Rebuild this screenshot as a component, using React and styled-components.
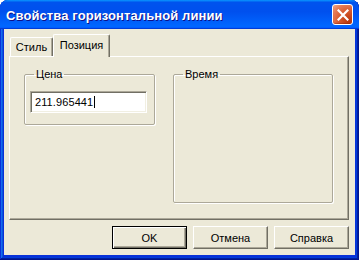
import styled, { createGlobalStyle } from 'styled-components';

const GlobalStyle = createGlobalStyle`
  html, body {
    margin: 0;
    padding: 0;
    background: #ffffff;
  }
  * {
    box-sizing: border-box;
  }
`;

export default function App() {
  return (
    <>
      <GlobalStyle />
      <Window>
        <TitleBar>
          <TitleText>Свойства горизонтальной линии</TitleText>
          <CloseButton>
            <svg width="12" height="12" viewBox="0 0 12 12">
              <path d="M1.5 1.5 L10.5 10.5 M10.5 1.5 L1.5 10.5" stroke="#fff" strokeWidth="2.2" strokeLinecap="square" />
            </svg>
          </CloseButton>
        </TitleBar>
        <Client>
          <TabStrip>
            <Tab width={43}>Стиль</Tab>
            <Tab width={57} selected>Позиция</Tab>
          </TabStrip>
          <TabPanel>
            <Group width={131} height={57}>
              <Legend>Цена</Legend>
              <TextBox>
                211.965441
                <Caret />
              </TextBox>
            </Group>
            <Group width={160} height={135}>
              <Legend>Время</Legend>
            </Group>
          </TabPanel>
          <ButtonRow>
            <Button isDefault>OK</Button>
            <Button>Отмена</Button>
            <Button>Справка</Button>
          </ButtonRow>
        </Client>
      </Window>
    </>
  );
}

const Window = styled.div`
  width: 359px;
  height: 260px;
  display: flex;
  flex-direction: column;
  padding: 0 4px 5px 4px;
  background: #0831d9;
  border-radius: 8px 8px 0 0;
  box-shadow: inset -1px -1px #00138c, inset 1px 1px #0831d9,
    inset -2px -2px #001ea0, inset 2px 2px #166aee,
    inset -3px -3px #003bda, inset 3px 3px #0855dd;
  font-family: 'Liberation Sans', Arial, sans-serif;
  font-size: 11px;
  color: #000;
`;

const TitleBar = styled.div`
  height: 29px;
  margin: 0 -4px;
  padding: 0 6px 0 6px;
  display: flex;
  align-items: center;
  justify-content: space-between;
  border-radius: 8px 8px 0 0;
  background: linear-gradient(
    180deg,
    #0997ff,
    #0053ee 8%,
    #0050ee 40%,
    #0066ff 88%,
    #0066ff 93%,
    #005bff 95%,
    #003dd7 96%,
    #003dd7
  );
`;

const TitleText = styled.div`
  font-family: 'Liberation Sans', Arial, sans-serif;
  font-weight: bold;
  font-size: 13px;
  color: #ffffff;
  text-shadow: 1px 1px #0f1089;
  letter-spacing: 0.1px;
  padding-top: 1px;
`;

const CloseButton = styled.div`
  width: 21px;
  height: 21px;
  margin-right: 0;
  display: flex;
  align-items: center;
  justify-content: center;
  border: 1px solid #ffffff;
  border-radius: 3px;
  background: radial-gradient(circle at 85% 85%, #b8360c 0%, #d65a2e 45%, #e67c57 75%, #f2a88a 100%);
  box-shadow: inset 0 -1px 1px rgba(120, 20, 0, 0.4);
`;

const Client = styled.div`
  flex: 1;
  display: flex;
  flex-direction: column;
  padding: 5px 6px 6px 5px;
  background: #ece9d8;
`;

const TabStrip = styled.div`
  height: 22px;
  display: flex;
  align-items: flex-end;
  padding-left: 1px;
`;

const Tab = styled.div`
  position: relative;
  z-index: ${({ selected }) => (selected ? 2 : 1)};
  width: ${({ width }) => width}px;
  height: ${({ selected }) => (selected ? 23 : 19)}px;
  margin-bottom: ${({ selected }) => (selected ? -1 : 0)}px;
  display: flex;
  align-items: center;
  justify-content: center;
  padding-bottom: ${({ selected }) => (selected ? 3 : 0)}px;
  background: #ece9d8;
  border-top: 1px solid #ffffff;
  border-left: 1px solid #ffffff;
  border-right: 1px solid #716f64;
  border-radius: 2px 2px 0 0;
  box-shadow: inset -1px 0 #aca899;
`;

const TabPanel = styled.div`
  height: 164px;
  display: flex;
  align-items: flex-start;
  gap: 18px;
  padding: 11px 0 0 14px;
  background: #ece9d8;
  border-top: 1px solid #ffffff;
  border-left: 1px solid #ffffff;
  border-right: 1px solid #716f64;
  border-bottom: 1px solid #716f64;
  box-shadow: inset -1px -1px #aca899;
`;

const Group = styled.fieldset`
  width: ${({ width }) => width}px;
  height: ${({ height }) => height}px;
  margin: 0;
  padding: 10px 0 0 5px;
  min-inline-size: 0;
  border: 1px solid #aca899;
  border-radius: 2px;
  box-shadow: 1px 1px #ffffff, inset 1px 1px #ffffff;
`;

const Legend = styled.legend`
  margin-left: 4px;
  padding: 0 2px;
  font-size: 11px;
  line-height: 13px;
`;

const TextBox = styled.div`
  width: 117px;
  height: 22px;
  display: flex;
  align-items: center;
  padding-left: 4px;
  background: #ffffff;
  border-top: 1px solid #aca899;
  border-left: 1px solid #aca899;
  border-right: 1px solid #ffffff;
  border-bottom: 1px solid #ffffff;
  box-shadow: inset 1px 1px #716f64, inset -1px -1px #f1efe2;
  font-size: 11px;
  letter-spacing: 0.1px;
`;

const Caret = styled.span`
  display: inline-block;
  width: 1px;
  height: 12px;
  margin-left: 1px;
  background: #000000;
`;

const ButtonRow = styled.div`
  display: flex;
  justify-content: flex-end;
  gap: 6px;
  margin-top: 6px;
  padding-right: 0;
`;

const Button = styled.div`
  width: 75px;
  height: 23px;
  display: flex;
  align-items: center;
  justify-content: center;
  background: #ece9d8;
  border: 1px solid ${({ isDefault }) => (isDefault ? '#000000' : '#716f64')};
  border-top-color: ${({ isDefault }) => (isDefault ? '#000000' : '#ffffff')};
  border-left-color: ${({ isDefault }) => (isDefault ? '#000000' : '#ffffff')};
  box-shadow: ${({ isDefault }) =>
    isDefault
      ? 'inset 1px 1px #ffffff, inset -1px -1px #716f64, inset -2px -2px #aca899'
      : 'inset -1px -1px #aca899'};
  font-size: 11px;
`;
